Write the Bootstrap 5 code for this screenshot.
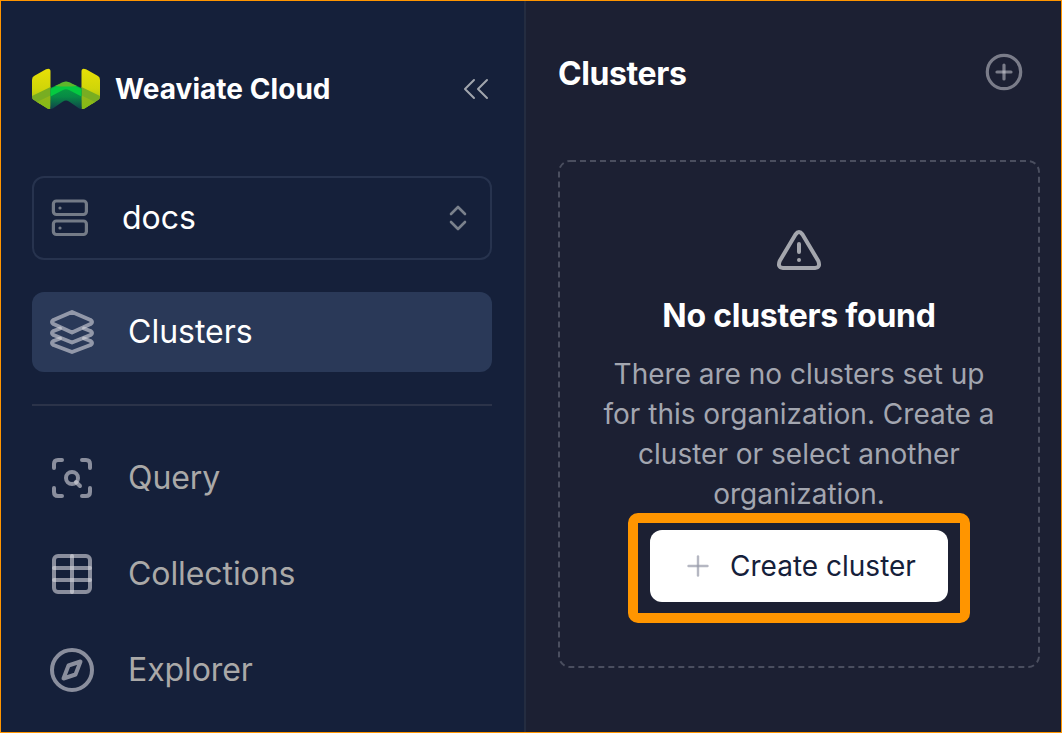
<!DOCTYPE html>
<html lang="en">
<head>
<meta charset="utf-8">
<meta name="viewport" content="width=device-width, initial-scale=1">
<title>Weaviate Cloud</title>
<link href="https://cdn.jsdelivr.net/npm/bootstrap@5.3.0/dist/css/bootstrap.min.css" rel="stylesheet">
<style>
body{font-family:Inter,"Liberation Sans",sans-serif;background:#1c2033;color:#fff}
.app-frame{height:733px;border:1px solid #ff9500}
.side-pane{width:525px;background:#15203a;border-right:2px solid #242c40;padding:0 32px 0 31px}
.brand-row{height:42px;margin-top:67px;padding-right:2px}
.brand-name{font-size:28px;font-weight:700;line-height:42px;letter-spacing:.05px;margin-left:15px}
.org-select{height:84px;margin-top:66px;border:2px solid #27334e;border-radius:12px;padding:0 16px;font-size:32px}
.org-select span{margin-left:32px}
.side-link{height:80px;border-radius:12px;padding-left:16px;font-size:32px;color:#aaa9a8;text-decoration:none;gap:32px}
.side-link.active{background:#2a3958;color:#fff;margin-top:32px}
.side-rule{height:2px;background:#2b3349;margin:32px 0}
.side-list{gap:16px;letter-spacing:-.08px}
.main-pane{padding:0 21px 0 32px}
.page-head{height:48px;margin-top:47px;padding-right:12px}
.page-head h1{font-size:32px;font-weight:700;letter-spacing:-.4px;line-height:48px;padding-top:3px}
.empty-box{position:relative;height:508px;margin-top:64px}
.dash-outline{position:absolute;inset:0;width:100%;height:100%;stroke-linecap:butt}
.warn-icon{margin-top:66px}
.empty-box h2{font-size:32px;line-height:48px;font-weight:700;letter-spacing:-.25px;margin:18px 0 0}
.empty-box p{font-size:28px;line-height:40px;color:#a3a6b0;margin:14px 0 0}
.focus-frame{width:342px;height:110px;margin-top:-1px;border:10px solid #ff9500;border-radius:10px;position:relative;padding:7px 12px 11px}
.focus-frame::before{content:"";position:absolute;inset:-2px;border:2px solid #ff9500;pointer-events:none}
.create-btn{height:72px;background:#fff;color:#15203a;border:0;border-radius:12px;font-size:28px;padding:0 0 0 2px;gap:18px}
svg{flex:none;fill:none;stroke-linecap:round;stroke-linejoin:round}
.nav-icon{stroke:#d8d8df;stroke-opacity:.6;stroke-width:4}
</style>
</head>
<body>
<div class="app-frame d-flex overflow-hidden">
<aside class="side-pane d-flex flex-column flex-shrink-0">
  <div class="brand-row d-flex align-items-center">
    <svg width="68" height="42" viewBox="0 0 68 42">
      <defs>
        <linearGradient id="yl" x1="0" y1="0" x2="0" y2="1"><stop stop-color="#e8df06"/><stop offset=".5" stop-color="#d0d509"/><stop offset="1" stop-color="#88b51b"/></linearGradient>
        <linearGradient id="gr" x1="0" y1="0" x2="0" y2="1"><stop stop-color="#0aa840"/><stop offset=".55" stop-color="#078a45"/><stop offset="1" stop-color="#11424b"/></linearGradient>
        <linearGradient id="lo" x1="0" y1="0" x2="0" y2="1"><stop stop-color="#94b51a"/><stop offset="1" stop-color="#82bc16"/></linearGradient>
      </defs>
      <path fill="url(#yl)" d="M2 8 14 1.200Q18.500-.5 18.500 3.500V41H16L2 32Q0 31 0 28V12Q0 9 2 8ZM66 8 54 1.200Q49.500-.5 49.500 3.500V41H52L66 32Q68 31 68 28V12Q68 9 66 8Z"/>
      <path fill="#78ad22" d="M0 28 18.500 19V32L8 36 2 32Q0 31 0 28ZM68 28 49.500 19V32L60 36 66 32Q68 31 68 28Z"/>
      <path fill="url(#lo)" d="M5 34 18.500 27.500V37Q18.500 41 15 40ZM63 34 49.500 27.500V37Q49.500 41 53 40Z"/>
      <path fill="url(#gr)" d="M18.500 20 31 14.500Q34 13 37 14.500L49.500 20V41Q47 41 45 39L37 33.500Q34 31.500 31 33.500L23 39Q21 41 18.500 41Z"/>
      <path fill="#05ca40" d="M18.500 21 31 14.700Q34 13.500 37 14.700L49.500 21V28.500L37 22Q34 20.500 31 22L18.500 28.500Z"/>
      <path fill="#5fb52b" d="M23 18 31 14.200Q34 13 37 14.200L45 18Q34 19 23 18Z"/>
    </svg>
    <span class="brand-name text-nowrap">Weaviate Cloud</span>
    <svg class="ms-auto" width="28" height="24" viewBox="0 0 28 24" stroke="#a1a5ad" stroke-width="2"><path d="M12 3 3 12l9 9M25 3l-9 9 9 9"/></svg>
  </div>
  <div class="org-select d-flex align-items-center">
    <svg width="40" height="40" viewBox="0 0 40 40" stroke="#747b87" stroke-width="3.200"><rect x="3.400" y="3" width="33" height="13.500" rx="3"/><rect x="3.400" y="23" width="33" height="13.500" rx="3"/><path d="M10 10h.01M10 30h.01"/></svg>
    <span>docs</span>
    <svg class="ms-auto" width="32" height="32" viewBox="0 0 32 32" stroke="#7a818c" stroke-width="2.600"><path d="m9 12 7-7 7 7M9 20l7 7 7-7"/></svg>
  </div>
  <a class="side-link active d-flex align-items-center" href="#">
    <svg class="nav-icon" width="48" height="48" viewBox="0 0 48 48">
      <path d="M5.500 12 24 4l18.500 8q3 2 0 4L24 24.500 5.500 16q-3-2 0-4Z"/>
      <path d="M12 20.500 5.500 23q-3 2 0 4L24 34.500 42.500 27q3-2 0-4L36 20.500"/>
      <path d="M12 30.500 5.500 33q-3 2 0 4L24 44l18.500-7q3-2 0-4L36 30.500"/>
    </svg><span>Clusters</span>
  </a>
  <div class="side-rule"></div>
  <nav class="side-list d-flex flex-column">
    <a class="side-link d-flex align-items-center" href="#">
      <svg class="nav-icon" width="48" height="48" viewBox="0 0 48 48"><path d="M6 14v-4q0-4 4-4h4M34 6h4q4 0 4 4v4M42 34v4q0 4-4 4h-4M14 42h-4q-4 0-4-4v-4"/><circle cx="24" cy="24" r="6"/><path d="m28 28 4 4"/></svg><span>Query</span>
    </a>
    <a class="side-link d-flex align-items-center" href="#">
      <svg class="nav-icon" width="48" height="48" viewBox="0 0 48 48"><rect x="6" y="6" width="36" height="36" rx="4"/><path d="M24 6v36"/><path d="M6 18h36M6 30h36"/></svg><span>Collections</span>
    </a>
    <a class="side-link d-flex align-items-center" href="#">
      <svg class="nav-icon" width="48" height="48" viewBox="0 0 48 48"><circle cx="24" cy="24" r="20"/><path d="m32.500 15.500-12 4-5 13 12-4Z"/></svg><span>Explorer</span>
    </a>
  </nav>
</aside>
<main class="main-pane flex-grow-1">
  <div class="page-head d-flex align-items-center justify-content-between">
    <h1 class="m-0">Clusters</h1>
    <svg width="48" height="48" viewBox="0 0 48 48" stroke="#d8d8df" stroke-opacity=".5" stroke-width="3.200"><circle cx="24" cy="24" r="16.700"/><path d="M17 24h14"/><path d="M24 17v14"/></svg>
  </div>
  <section class="empty-box d-flex flex-column align-items-center text-center">
    <svg class="dash-outline" stroke="#4a4e5f" stroke-width="2" stroke-dasharray="6 4"><rect x="1" y="1" width="480" height="506" rx="11"/></svg>
    <svg class="warn-icon" width="48" height="48" viewBox="0 0 48 48" stroke="#a4a6ad" stroke-width="4"><path d="M20.500 8.500 4.700 35q-2.500 6.500 3.300 7h32q5.800-.5 3.300-7L27.500 8.500q-3.500-5-7 0ZM24 18v8M24 34h.01"/></svg>
    <h2 class="text-nowrap">No clusters found</h2>
    <p class="text-nowrap">There are no clusters set up<br>for this organization. Create a<br>cluster or select another<br>organization.</p>
    <div class="focus-frame">
      <button class="create-btn btn w-100 d-flex align-items-center justify-content-center" type="button"><svg width="28" height="28" viewBox="0 0 28 28" stroke="#9598a8" stroke-opacity=".7" stroke-width="2.400"><path d="M4.500 14h19"/><path d="M14 4.500v19"/></svg><span>Create cluster</span></button>
    </div>
  </section>
</main>
</div>
<script src="https://cdn.jsdelivr.net/npm/bootstrap@5.3.0/dist/js/bootstrap.bundle.min.js"></script>
</body>
</html>
